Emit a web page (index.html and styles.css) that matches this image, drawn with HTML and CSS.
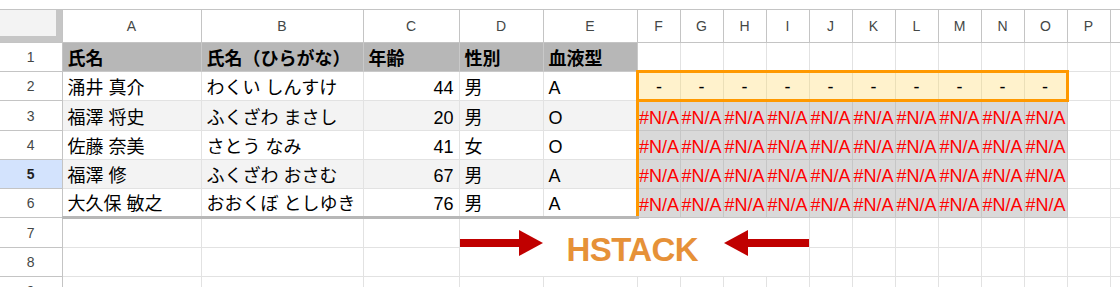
FILE: index.html
```html
<!DOCTYPE html>
<html lang="ja">
<head>
<meta charset="utf-8">
<link rel="stylesheet" href="styles.css">
</head>
<body>
<table class="sheet">
  <colgroup>
    <col class="w-rh"><col class="w-a"><col class="w-b"><col class="w-c"><col class="w-d"><col class="w-e">
    <col class="w-s"><col class="w-s"><col class="w-s"><col class="w-s"><col class="w-s">
    <col class="w-s"><col class="w-s"><col class="w-s"><col class="w-s"><col class="w-s">
    <col class="w-s"><col class="w-s">
  </colgroup>
  <tr class="r-head">
    <td class="corner"><div class="corner-in"></div></td>
    <td class="ch">A</td><td class="ch">B</td><td class="ch">C</td><td class="ch">D</td><td class="ch">E</td>
    <td class="ch">F</td><td class="ch">G</td><td class="ch">H</td><td class="ch">I</td><td class="ch">J</td>
    <td class="ch">K</td><td class="ch">L</td><td class="ch">M</td><td class="ch">N</td><td class="ch">O</td>
    <td class="ch">P</td><td class="ch"></td>
  </tr>
  <tr class="r29">
    <td class="rh">1</td>
    <td class="h1">氏名</td><td class="h1">氏名（ひらがな）</td><td class="h1">年齢</td><td class="h1">性別</td><td class="h1">血液型</td>
    <td></td><td></td><td></td><td></td><td></td><td></td><td></td><td></td><td></td><td></td><td></td><td></td>
  </tr>
  <tr class="r29">
    <td class="rh">2</td>
    <td>涌井 真介</td><td>わくい しんすけ</td><td class="num">44</td><td>男</td><td>A</td>
    <td class="yl first">-</td><td class="yl">-</td><td class="yl">-</td><td class="yl">-</td><td class="yl">-</td>
    <td class="yl">-</td><td class="yl">-</td><td class="yl">-</td><td class="yl">-</td><td class="yl last">-</td>
    <td></td><td></td>
  </tr>
  <tr class="r30">
    <td class="rh">3</td>
    <td class="band">福澤 将史</td><td class="band">ふくざわ まさし</td><td class="band num">20</td><td class="band">男</td><td class="band">O</td>
    <td class="na first">#N/A</td><td class="na">#N/A</td><td class="na">#N/A</td><td class="na">#N/A</td><td class="na">#N/A</td>
    <td class="na">#N/A</td><td class="na">#N/A</td><td class="na">#N/A</td><td class="na">#N/A</td><td class="na">#N/A</td>
    <td></td><td></td>
  </tr>
  <tr class="r29">
    <td class="rh">4</td>
    <td>佐藤 奈美</td><td>さとう なみ</td><td class="num">41</td><td>女</td><td>O</td>
    <td class="na first">#N/A</td><td class="na">#N/A</td><td class="na">#N/A</td><td class="na">#N/A</td><td class="na">#N/A</td>
    <td class="na">#N/A</td><td class="na">#N/A</td><td class="na">#N/A</td><td class="na">#N/A</td><td class="na">#N/A</td>
    <td></td><td></td>
  </tr>
  <tr class="r29">
    <td class="rh sel">5</td>
    <td class="band">福澤 修</td><td class="band">ふくざわ おさむ</td><td class="band num">67</td><td class="band">男</td><td class="band">A</td>
    <td class="na first">#N/A</td><td class="na">#N/A</td><td class="na">#N/A</td><td class="na">#N/A</td><td class="na">#N/A</td>
    <td class="na">#N/A</td><td class="na">#N/A</td><td class="na">#N/A</td><td class="na">#N/A</td><td class="na">#N/A</td>
    <td></td><td></td>
  </tr>
  <tr class="r29">
    <td class="rh">6</td>
    <td class="end">大久保 敏之</td><td class="end">おおくぼ としゆき</td><td class="end num">76</td><td class="end">男</td><td class="end">A</td>
    <td class="na first">#N/A</td><td class="na">#N/A</td><td class="na">#N/A</td><td class="na">#N/A</td><td class="na">#N/A</td>
    <td class="na">#N/A</td><td class="na">#N/A</td><td class="na">#N/A</td><td class="na">#N/A</td><td class="na">#N/A</td>
    <td></td><td></td>
  </tr>
  <tr class="r30">
    <td class="rh">7</td>
    <td></td><td></td><td></td>
    <td class="ann" colspan="6" rowspan="2">
      <div class="ann-row">
        <svg class="arrow" width="83" height="26" viewBox="0 0 83 26" aria-hidden="true">
          <rect x="0" y="9" width="61" height="8" fill="#c00000"/>
          <polygon points="59,0 83,13 59,26" fill="#c00000"/>
        </svg>
        <span class="ann-text">HSTACK</span>
        <svg class="arrow" width="85" height="26" viewBox="0 0 85 26" aria-hidden="true">
          <polygon points="0,13 24,0 24,26" fill="#c00000"/>
          <rect x="22" y="9" width="63" height="8" fill="#c00000"/>
        </svg>
      </div>
    </td>
    <td></td><td></td><td></td><td></td><td></td><td></td><td></td><td></td>
  </tr>
  <tr class="r29">
    <td class="rh">8</td>
    <td></td><td></td><td></td>
    <td></td><td></td><td></td><td></td><td></td><td></td><td></td><td></td>
  </tr>
  <tr class="r29">
    <td class="rh">9</td>
    <td></td><td></td><td></td><td></td><td></td>
    <td></td><td></td><td></td><td></td><td></td><td></td><td></td><td></td><td></td><td></td><td></td><td></td>
  </tr>
</table>
</body>
</html>
```
FILE: styles.css
```css
html, body {
  margin: 0;
  background: #ffffff;
}
body {
  padding-top: 9px;
  overflow: hidden;
  font-family: "Liberation Sans", Arial, "Noto Sans CJK JP", sans-serif;
}
.sheet {
  border-collapse: collapse;
  table-layout: fixed;
  width: 1153px;
}
.w-rh { width: 62px; }
.w-a { width: 139px; }
.w-b { width: 162px; }
.w-c { width: 96px; }
.w-d { width: 84px; }
.w-e { width: 94px; }
.w-s { width: 43px; }

.r-head { height: 33px; }
.r29 { height: 29px; }
.r30 { height: 30px; }

.sheet td {
  border: 1px solid #e2e2e2;
  padding: 0 5px 1px;
  font-size: 18px;
  line-height: 22px;
  vertical-align: bottom;
  white-space: nowrap;
  overflow: hidden;
  color: #000000;
}

.sheet td.corner {
  padding: 0;
  border: 1px solid #c4c4c4;
  border-left: 0;
  background: #c6c6c6;
  vertical-align: top;
}
.corner-in {
  width: 56px;
  height: 26px;
  background: #f3f3f3;
}

.sheet td.ch,
.sheet td.rh {
  border-color: #c4c4c4;
  font-size: 14px;
  line-height: 16px;
  color: #444746;
  text-align: center;
  vertical-align: middle;
  padding: 0;
}
.sheet td.rh { border-left: 0; }
.sheet td.rh.sel {
  background: #d3e3fd;
  font-weight: bold;
  color: #1f1f1f;
}

.sheet td.h1 {
  background: #b7b7b7;
  border-color: #c9c9c9;
  font-weight: bold;
}
.sheet td.band { background: #f3f3f3; }
.sheet td.num { text-align: right; }
.sheet td.end { border-bottom: 3px solid #b7b7b7; }

.sheet td.yl {
  background: #fff2cc;
  border-color: #ebdfb8;
  border-top: 3px solid #ff9900;
  border-bottom: 3px solid #ff9900;
  text-align: center;
  padding: 0 0 1px;
}
.sheet td.yl.first { border-left: 3px solid #ff9900; }
.sheet td.yl.last { border-right: 3px solid #ff9900; }

.sheet td.na {
  background: #d9d9d9;
  border-color: #c6c6c6;
  color: #ff0000;
  text-align: center;
  padding: 0 0 1px;
  overflow: visible;
}
.sheet td.na.first { border-left: 3px solid #ff9900; }

.sheet td.ann {
  padding: 0;
  background: #ffffff;
  vertical-align: top;
  overflow: visible;
}
.ann-row {
  display: flex;
  align-items: flex-start;
}
.arrow {
  flex: none;
  margin-top: 11px;
}
.ann-text {
  margin: 14px 26px 0 24px;
  font-size: 33px;
  line-height: 33px;
  font-weight: bold;
  letter-spacing: -0.6px;
  color: #e69138;
}
```
